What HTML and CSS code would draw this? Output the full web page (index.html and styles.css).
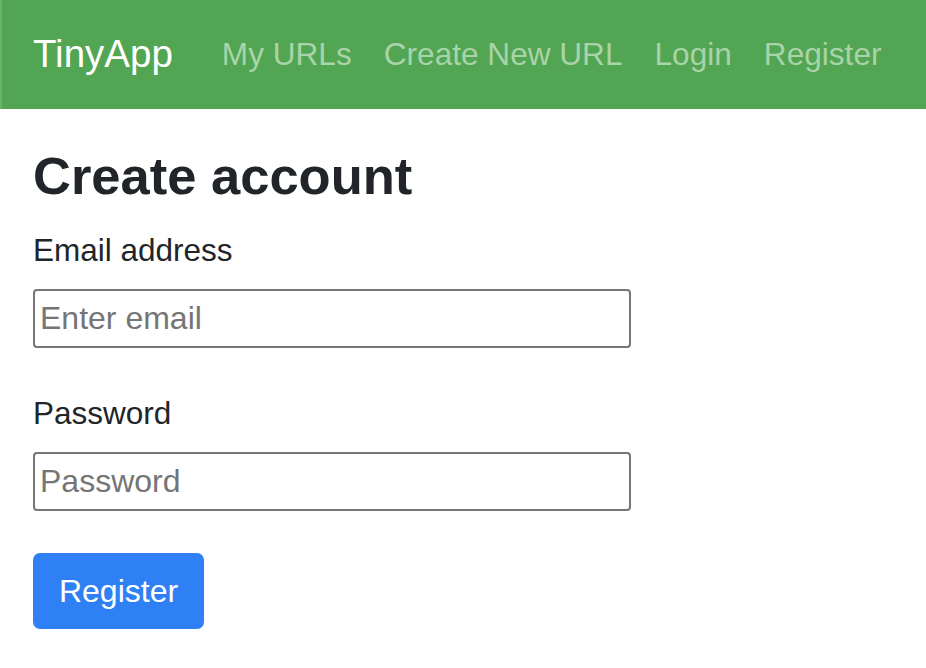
FILE: index.html
```html
<!DOCTYPE html>
<html lang="en">
<head>
<meta charset="utf-8">
<title>TinyApp - Register</title>
<link rel="stylesheet" href="styles.css">
</head>
<body>
<nav class="navbar">
  <a class="brand" href="#">TinyApp</a>
  <ul class="nav-links">
    <li><a href="#">My URLs</a></li>
    <li><a href="#">Create New URL</a></li>
    <li><a href="#">Login</a></li>
    <li><a href="#">Register</a></li>
  </ul>
</nav>
<main class="content">
  <h1 class="title">Create account</h1>
  <form class="form">
    <div class="form-group">
      <label class="label" for="email">Email address</label>
      <input class="input" type="email" id="email" placeholder="Enter email">
    </div>
    <div class="form-group">
      <label class="label" for="password">Password</label>
      <input class="input" type="password" id="password" placeholder="Password">
    </div>
    <button class="btn" type="button">Register</button>
  </form>
</main>
</body>
</html>
```
FILE: styles.css
```css
* { box-sizing: border-box; }
html, body { margin: 0; padding: 0; }
body {
  font-family: "Liberation Sans", Arial, sans-serif;
  color: #212529;
  background: #fff;
}
.navbar {
  height: 109px;
  background: #52a552;
  border-left: 2px solid #6cb36c;
  display: flex;
  align-items: center;
  padding: 0 31px;
}
.brand {
  color: #fff;
  text-decoration: none;
  font-size: 38.5px;
  margin-right: 49px;
  padding-bottom: 2px;
}
.nav-links {
  list-style: none;
  margin: 0;
  padding: 0;
  display: flex;
  gap: 32px;
}
.nav-links a {
  color: #a9d3a9;
  text-decoration: none;
  font-size: 31.6px;
}
.content {
  padding: 35px 33px 0;
}
.title {
  font-size: 52.5px;
  font-weight: bold;
  line-height: 1.2;
  margin: 0 0 20px;
}
.form-group { margin-bottom: 42px; }
.label {
  display: block;
  font-size: 31.5px;
  line-height: 46px;
  margin-bottom: 16px;
}
.input {
  display: block;
  width: 598px;
  height: 59px;
  border: 2px solid #767676;
  border-radius: 4px;
  padding: 0 5px;
  font-family: "Liberation Sans", Arial, sans-serif;
  font-size: 32px;
  color: #212529;
  background: #fff;
}
.input::placeholder { color: #757575; }
.btn {
  display: block;
  width: 171px;
  height: 76px;
  border: none;
  border-radius: 7px;
  background: #2f7ff5;
  color: #fff;
  font-family: "Liberation Sans", Arial, sans-serif;
  font-size: 32px;
  padding: 0;
}
```
